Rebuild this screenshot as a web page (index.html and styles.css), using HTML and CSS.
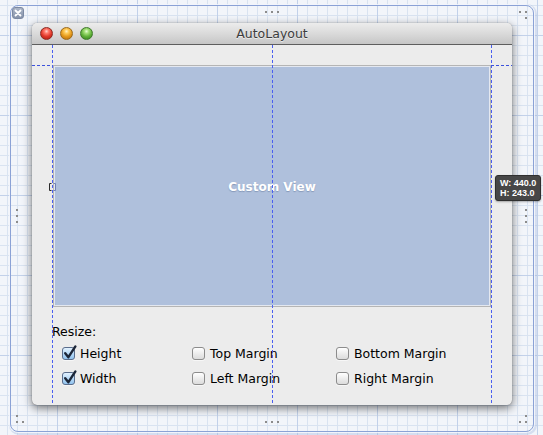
FILE: index.html
```html
<!DOCTYPE html>
<html>
<head>
<meta charset="utf-8">
<link rel="stylesheet" href="styles.css">
</head>
<body>
<div class="frame">
  <svg class="handles" width="522" height="425" viewBox="0 0 522 425">
    <g fill="#8c8c8c">
      <rect x="254" y="5" width="2" height="2"/><rect x="260" y="5" width="2" height="2"/><rect x="266" y="5" width="2" height="2"/>
      <rect x="508" y="5" width="2" height="2"/><rect x="514" y="5" width="2" height="2"/><rect x="514" y="11" width="2" height="2"/>
      <rect x="514" y="203" width="2" height="2"/><rect x="514" y="209" width="2" height="2"/><rect x="514" y="215" width="2" height="2"/>
      <rect x="514" y="409" width="2" height="2"/><rect x="508" y="415" width="2" height="2"/><rect x="514" y="415" width="2" height="2"/>
      <rect x="254" y="415" width="2" height="2"/><rect x="260" y="415" width="2" height="2"/><rect x="266" y="415" width="2" height="2"/>
      <rect x="5" y="409" width="2" height="2"/><rect x="5" y="415" width="2" height="2"/><rect x="11" y="415" width="2" height="2"/>
      <rect x="5" y="203" width="2" height="2"/><rect x="5" y="209" width="2" height="2"/><rect x="5" y="215" width="2" height="2"/>
    </g>
  </svg>
  <div class="closebtn">
    <svg width="10" height="10" viewBox="0 0 10 10"><path d="M2.5 2.5 L7.5 7.5 M7.5 2.5 L2.5 7.5" stroke="#fff" stroke-width="1.8" stroke-linecap="round"/></svg>
  </div>

  <div class="window">
    <div class="titlebar">
      <div class="lights">
        <span class="light red"></span>
        <span class="light yellow"></span>
        <span class="light green"></span>
      </div>
      <div class="title">AutoLayout</div>
    </div>
    <div class="content">
      <div class="customview">Custom View</div>
      <div class="resize">
        <div class="resize-label">Resize:</div>
        <div class="options">
          <div class="opt"><span class="cb checked"><svg class="tick" width="14" height="15" viewBox="0 0 14 15"><path d="M2.2 8.2 L5.4 12.2 L12.4 1.4" fill="none" stroke="#1c2638" stroke-width="2.4" stroke-linecap="round" stroke-linejoin="round"/></svg></span>Height</div>
          <div class="opt"><span class="cb"></span>Top Margin</div>
          <div class="opt"><span class="cb"></span>Bottom Margin</div>
          <div class="opt"><span class="cb checked"><svg class="tick" width="14" height="15" viewBox="0 0 14 15"><path d="M2.2 8.2 L5.4 12.2 L12.4 1.4" fill="none" stroke="#1c2638" stroke-width="2.4" stroke-linecap="round" stroke-linejoin="round"/></svg></span>Width</div>
          <div class="opt"><span class="cb"></span>Left Margin</div>
          <div class="opt"><span class="cb"></span>Right Margin</div>
        </div>
      </div>
      <div class="guide-v g-left"></div>
      <div class="guide-v g-center"></div>
      <div class="guide-v g-right"></div>
      <div class="guide-h gh-left"></div>
      <div class="guide-h gh-right"></div>
      <svg class="sizehandle" width="7" height="8" viewBox="0 0 7 8">
        <path d="M2.5 0.5 H0.5 V7.5 H2.5" fill="none" stroke="#2b2b2b" stroke-width="1"/>
        <path d="M4.5 0.5 H6.5 V7.5 H4.5" fill="none" stroke="#6f80b8" stroke-width="1"/>
      </svg>
    </div>
  </div>

  <div class="badge">W: 440.0<br>H: 243.0</div>
</div>
</body>
</html>
```

FILE: styles.css
```css
html, body {
  margin: 0;
  padding: 0;
}
body {
  width: 543px;
  height: 435px;
  overflow: hidden;
  background-color: #f2f5fa;
  background-image:
    linear-gradient(to right, #c2d1ea 1px, transparent 1px),
    linear-gradient(to bottom, #c2d1ea 1px, transparent 1px),
    linear-gradient(to right, #d9e3f1 1px, transparent 1px),
    linear-gradient(to bottom, #d9e3f1 1px, transparent 1px);
  background-size: 80px 80px, 80px 80px, 10px 10px, 10px 10px;
  background-position: 57px 0, 0 35px, 7px 0, 0 5px;
  font-family: "DejaVu Sans", "Liberation Sans", sans-serif;
}

.frame {
  position: relative;
  box-sizing: border-box;
  margin: 5px 0 0 10px;
  width: 524px;
  height: 427px;
  border: 1px solid #8ba2d6;
  border-radius: 8px;
  box-shadow: 0 0 0 1px rgba(255,255,255,0.7), 1px 1px 0 2px rgba(160,180,220,0.35);
}

.handles {
  position: absolute;
  left: 0;
  top: 0;
}

.closebtn {
  position: absolute;
  left: 1px;
  top: 1px;
  box-sizing: border-box;
  width: 12px;
  height: 12px;
  border-radius: 3px;
  border: 1px solid #7c89a2;
  background: linear-gradient(#aab4c6, #8693aa);
  display: flex;
  align-items: center;
  justify-content: center;
}

.window {
  position: relative;
  margin: 17px 0 0 21px;
  width: 480px;
  height: 382px;
  border-radius: 5px;
  background: #ececec;
  box-shadow: 0 3px 10px rgba(0,0,0,0.55), 0 0 1px rgba(0,0,0,0.5);
}

.titlebar {
  display: grid;
  grid-template-columns: 1fr;
  align-items: center;
  height: 21px;
  border-bottom: 1px solid #5e5e5e;
  border-radius: 5px 5px 0 0;
  background: linear-gradient(#ececec, #dadada 50%, #c6c6c6);
}
.lights, .title {
  grid-area: 1 / 1;
}
.lights {
  display: flex;
  gap: 7px;
  padding-left: 8px;
}
.light {
  width: 13px;
  height: 13px;
  border-radius: 50%;
  box-sizing: border-box;
}
.red {
  background: radial-gradient(circle at 50% 30%, #ffd2cc 0, #ff7a6c 22%, #e0382a 55%, #a8180e 100%);
  border: 1px solid #8c2a22;
}
.yellow {
  background: radial-gradient(circle at 50% 30%, #fff1c8 0, #ffcc5a 22%, #e59a1c 55%, #b0660a 100%);
  border: 1px solid #9a6a1c;
}
.green {
  background: radial-gradient(circle at 50% 30%, #e6ffd6 0, #a6e07a 22%, #62b23a 55%, #2e7c18 100%);
  border: 1px solid #3f7a2c;
}
.title {
  text-align: center;
  font-size: 12.5px;
  color: #3c3c3c;
  text-shadow: 0 1px 0 rgba(255,255,255,0.6);
  line-height: 21px;
}

.content {
  position: relative;
  height: 360px;
  padding-top: 20px;
  box-sizing: border-box;
}

.customview {
  box-sizing: border-box;
  margin-left: 21px;
  width: 438px;
  height: 242px;
  border: 1px solid #b5b5b5;
  box-shadow: inset 0 0 0 1px #e4e8f0;
  background: #afc0dc;
  display: flex;
  align-items: center;
  justify-content: center;
  color: #ffffff;
  font-weight: bold;
  font-size: 12px;
  padding-top: 2px;
  text-shadow: 0 1px 1px rgba(60,80,120,0.35);
}

.resize {
  padding-left: 20px;
  margin-top: 17px;
  font-size: 12.5px;
  color: #000;
}
.resize-label {
  line-height: 16px;
}
.options {
  display: grid;
  grid-template-columns: 130px 144px auto;
  grid-auto-rows: 25px;
  padding-left: 10px;
  margin-top: 1px;
}
.opt {
  display: flex;
  align-items: center;
  gap: 5px;
  line-height: 16px;
  white-space: nowrap;
}
.cb {
  position: relative;
  box-sizing: border-box;
  width: 13px;
  height: 13px;
  border-radius: 3px;
  border: 1px solid #8c8c8c;
  background: linear-gradient(#ffffff, #e9e9e9 60%, #dcdcdc);
  box-shadow: 0 1px 0 rgba(255,255,255,0.6);
  flex: none;
}
.cb.checked {
  border-color: #5a6d8c;
  background: linear-gradient(#e2f1fe, #b8daf7 50%, #92c3ee);
}
.tick {
  position: absolute;
  left: 0;
  top: -3px;
  overflow: visible;
}

.guide-v {
  position: absolute;
  top: 0;
  bottom: 0;
  width: 1px;
  background: repeating-linear-gradient(to bottom, #4a5ff0 0 3px, transparent 3px 5px);
}
.g-left { left: 20px; }
.g-center { left: 240px; }
.g-right { left: 459px; }
.guide-h {
  position: absolute;
  top: 20px;
  height: 1px;
  background: repeating-linear-gradient(to right, #3c52dc 0 3px, transparent 3px 5px);
}
.gh-left { left: 0; width: 20px; }
.gh-right { left: 459px; width: 21px; }

.sizehandle {
  position: absolute;
  left: 17px;
  top: 138px;
}

.badge {
  position: absolute;
  left: 484px;
  top: 169px;
  box-sizing: border-box;
  width: 46px;
  height: 26px;
  padding: 2px 0 0 4px;
  border-radius: 3px;
  background: #474747;
  border: 1px solid #2f2f2f;
  box-shadow: 0 1px 2px rgba(0,0,0,0.3);
  color: #ffffff;
  font-family: "Liberation Sans", Arial, sans-serif;
  font-weight: bold;
  font-size: 9px;
  line-height: 10px;
  white-space: nowrap;
}
```
